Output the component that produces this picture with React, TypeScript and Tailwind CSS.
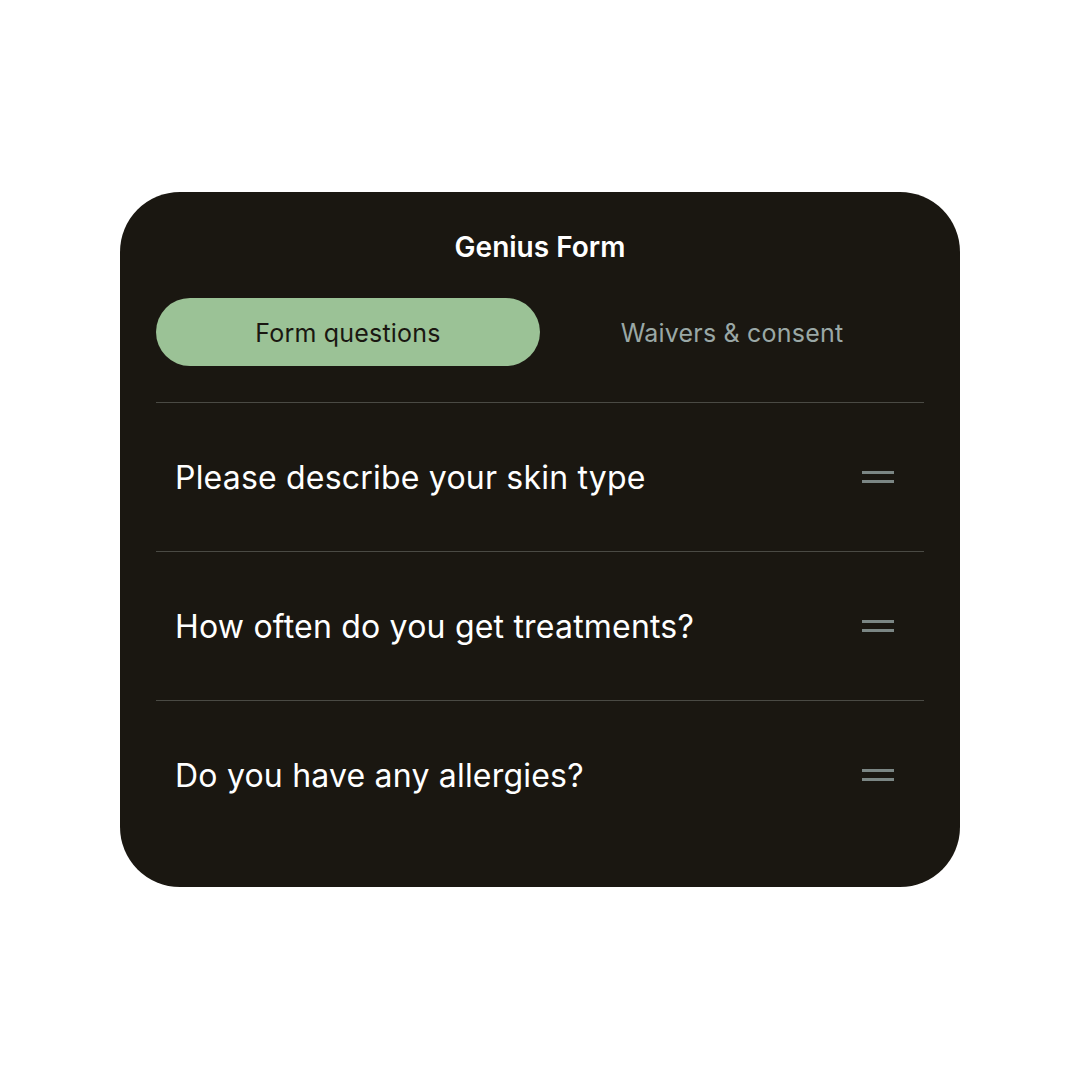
import { useState } from "react";

const questions = [
  "Please describe your skin type",
  "How often do you get treatments?",
  "Do you have any allergies?",
];

function DragHandle() {
  return (
    <div className="flex flex-col gap-[6px] w-[32px] -mt-[2px]">
      <div className="h-[3px] bg-[#7b8684]" />
      <div className="h-[3px] bg-[#7b8684]" />
    </div>
  );
}

export default function App() {
  const [tab, setTab] = useState<"form" | "waivers">("form");
  return (
    <div
      className="w-full h-[1080px] bg-white flex justify-center pt-[192px]"
      style={{ fontFamily: "Inter, 'Noto Sans', sans-serif" }}
    >
      <div className="w-[840px] h-[695px] rounded-[60px] bg-[#1a1711] px-[36px] pt-[36px]">
        <div className="text-center text-white text-[28px] font-semibold leading-[38px]">
          Genius Form
        </div>
        <div className="grid grid-cols-2 mt-[32px]">
          <button
            onClick={() => setTab("form")}
            className={
              tab === "form"
                ? "h-[68px] rounded-full bg-[#9bc296] text-[#1a1711] text-[25px] tracking-[0.2px] pt-[3px]"
                : "h-[68px] rounded-full text-[#9aa8a6] text-[25px] tracking-[0.2px] pt-[3px]"
            }
          >
            Form questions
          </button>
          <button
            onClick={() => setTab("waivers")}
            className={
              tab === "waivers"
                ? "h-[68px] rounded-full bg-[#9bc296] text-[#1a1711] text-[25px] tracking-[0.2px] pt-[3px]"
                : "h-[68px] rounded-full text-[#9aa8a6] text-[25px] tracking-[0.2px] pt-[3px]"
            }
          >
            Waivers &amp; consent
          </button>
        </div>
        <div className="mt-[36px]">
          {questions.map((q) => (
            <div
              key={q}
              className="h-[149px] border-t border-[#4a4a44] flex items-center justify-between pl-[19px] pr-[30px] pt-[1px]"
            >
              <span className="text-white text-[32px] tracking-[0.2px]">{q}</span>
              <DragHandle />
            </div>
          ))}
        </div>
      </div>
    </div>
  );
}
